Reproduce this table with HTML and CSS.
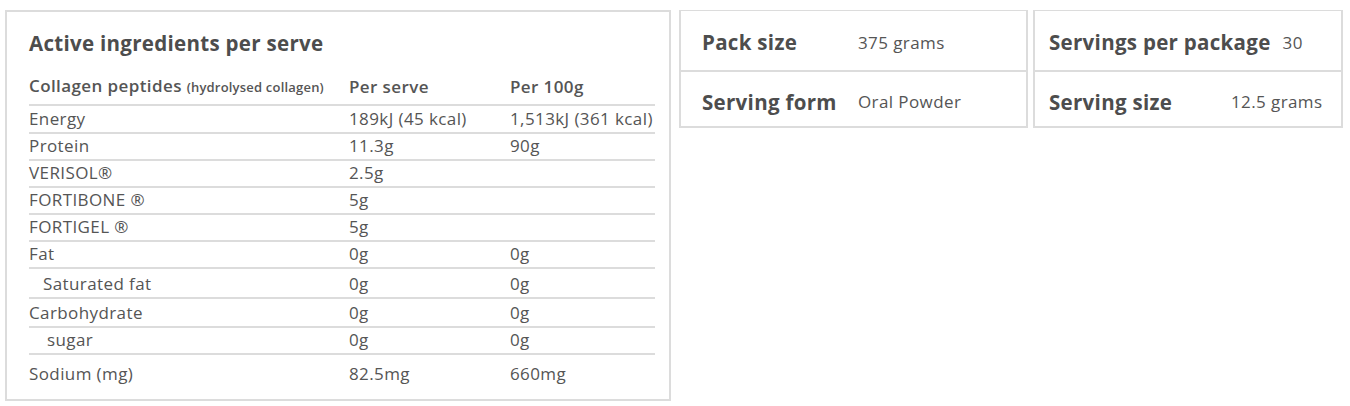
FILE: index.html
```html
<!DOCTYPE html>
<html lang="en">
<head>
    <meta charset="UTF-8">
    <meta name="viewport" content="width=device-width, initial-scale=1.0">
    <title>Product information</title>
    <link rel="stylesheet" href="styles.css">
</head>
<body>
    <div class="info-panel">
        <!-- Nutrition table -->
        <section class="ingredients">
            <h2>Active ingredients per serve</h2>
            <table class="nutrition">
                <thead>
                    <tr>
                        <th>Collagen peptides <small>(hydrolysed collagen)</small></th>
                        <th>Per serve</th>
                        <th>Per 100g</th>
                    </tr>
                </thead>
                <tbody>
                    <tr class="first"><td>Energy</td><td>189kJ (45 kcal)</td><td>1,513kJ (361 kcal)</td></tr>
                    <tr><td>Protein</td><td>11.3g</td><td>90g</td></tr>
                    <tr><td>VERISOL®</td><td>2.5g</td><td></td></tr>
                    <tr><td>FORTIBONE ®</td><td>5g</td><td></td></tr>
                    <tr><td>FORTIGEL ®</td><td>5g</td><td></td></tr>
                    <tr><td>Fat</td><td>0g</td><td>0g</td></tr>
                    <tr class="tall"><td class="sub">Saturated fat</td><td>0g</td><td>0g</td></tr>
                    <tr class="mid"><td>Carbohydrate</td><td>0g</td><td>0g</td></tr>
                    <tr><td class="sub sub-deep">sugar</td><td>0g</td><td>0g</td></tr>
                    <tr class="last"><td>Sodium (mg)</td><td>82.5mg</td><td>660mg</td></tr>
                </tbody>
            </table>
        </section>

        <!-- Pack details -->
        <section class="facts facts-pack">
            <div class="fact"><span class="label">Pack size</span><span class="value">375 grams</span></div>
            <div class="fact"><span class="label">Serving form</span><span class="value">Oral Powder</span></div>
        </section>

        <section class="facts facts-serve">
            <div class="fact"><span class="label">Servings per package</span><span class="value">30</span></div>
            <div class="fact"><span class="label">Serving size</span><span class="value">12.5 grams</span></div>
        </section>
    </div>
</body>
</html>
```

FILE: styles.css
```css
/* Base styles */
* {
    margin: 0;
    padding: 0;
    box-sizing: border-box;
}

body {
    font-family: 'Open Sans', 'Noto Sans', sans-serif;
    background: #fff;
    color: #555;
    padding: 10px 0 0 5px;
}

.info-panel {
    display: flex;
    align-items: flex-start;
}

/* Ingredients box */
.ingredients {
    width: 666px;
    height: 391px;
    border: 2px solid #dcdcdc;
    padding: 0 14px 0 22px;
}

.ingredients h2 {
    font-size: 20.5px;
    font-weight: 700;
    letter-spacing: 0.3px;
    line-height: 24px;
    color: #4d4d4d;
    margin: 19px 0 10px;
}

.nutrition {
    width: 626px;
    border-collapse: collapse;
    font-size: 17px;
    letter-spacing: 0.4px;
}

.nutrition th {
    text-align: left;
    font-weight: 600;
    font-size: 17px;
    line-height: 22px;
    padding: 10px 0 6px;
    color: #555;
    border-bottom: 2px solid #dcdcdc;
}

.nutrition th small {
    font-size: 13px;
    font-weight: 600;
    letter-spacing: 0.2px;
}

.nutrition th:nth-child(1),
.nutrition td:nth-child(1) {
    width: 320px;
}

.nutrition th:nth-child(2),
.nutrition td:nth-child(2) {
    width: 161px;
}

.nutrition td {
    line-height: 22px;
    padding: 1px 0 2px;
    border-bottom: 2px solid #dcdcdc;
    color: #555;
    white-space: nowrap;
}

.nutrition tr.first td {
    padding-top: 2px;
}

.nutrition tr.tall td {
    padding-top: 4px;
}

.nutrition tr.mid td {
    padding-top: 3px;
}

.nutrition tr.last td {
    padding-top: 8px;
    border-bottom: none;
}

.nutrition td.sub {
    padding-left: 14px;
}

.nutrition td.sub-deep {
    padding-left: 18px;
}

/* Fact cards */
.facts {
    border: 2px solid #dcdcdc;
    border-top-width: 1px;
}

.facts-pack {
    width: 349px;
    margin-left: 8px;
}

.facts-serve {
    width: 310px;
    margin-left: 5px;
}

.fact {
    display: flex;
    align-items: center;
    gap: 12px;
    height: 59px;
    padding: 3px 0 0 21px;
}

.fact + .fact {
    border-top: 2px solid #dcdcdc;
    height: 56px;
    padding-top: 5px;
}

.facts-serve .fact {
    padding-left: 14px;
}

.label {
    font-size: 20.5px;
    font-weight: 700;
    letter-spacing: 0.3px;
    color: #4d4d4d;
    white-space: nowrap;
    flex-shrink: 0;
}

.facts-pack .label {
    min-width: 144px;
}

.facts-serve .label {
    min-width: 170px;
}

.value {
    font-size: 17px;
    letter-spacing: 0.4px;
    color: #555;
    white-space: nowrap;
}
```
